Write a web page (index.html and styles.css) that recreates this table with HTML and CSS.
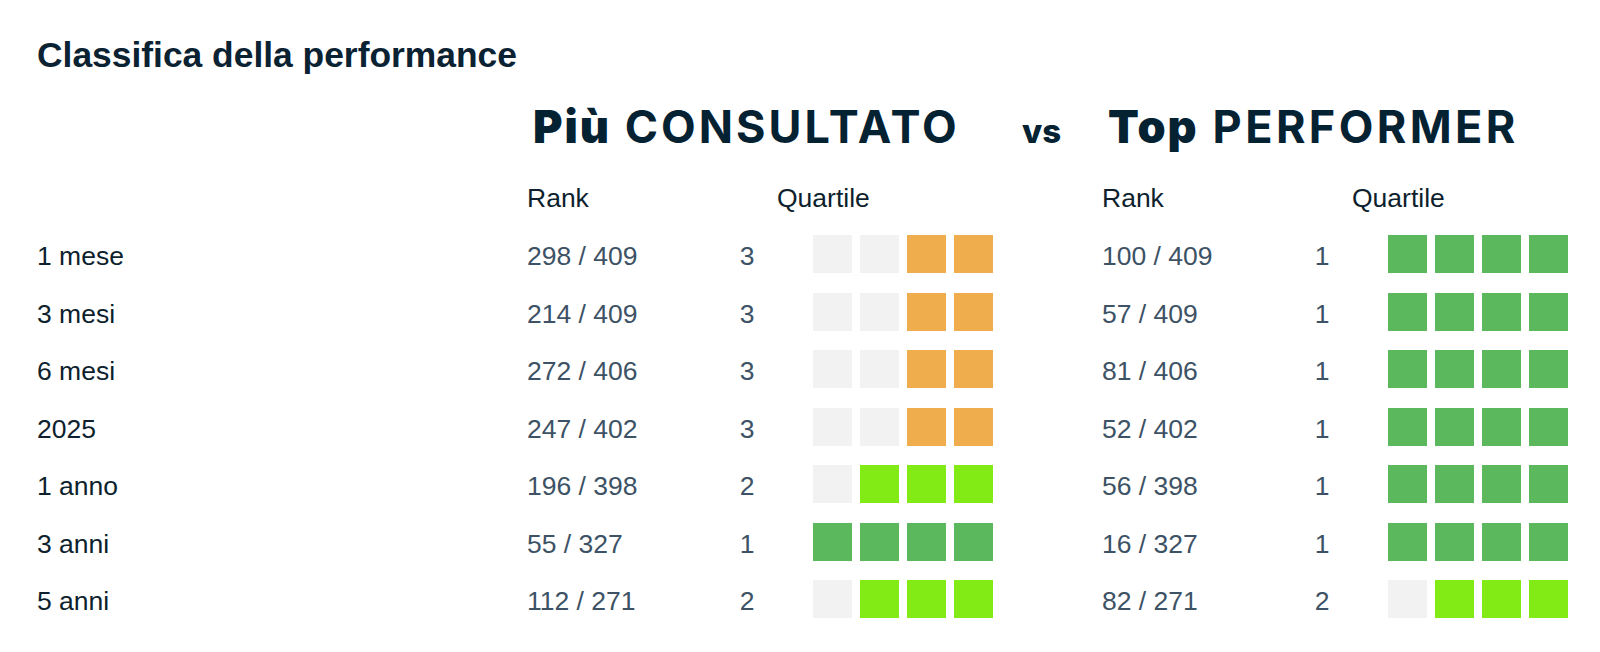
FILE: index.html
```html
<!DOCTYPE html>
<html lang="it">
<head>
<meta charset="utf-8">
<title>Classifica della performance</title>
<link rel="stylesheet" href="styles.css">
</head>
<body>
<div class="page">
  <h2 class="title">Classifica della performance</h2>
  <div class="heads">
    <div class="heads-spacer"></div>
    <div class="head head-left"><span class="strong">Più</span> CONSULTATO</div>
    <div class="vs">vs</div>
    <div class="head head-right"><span class="strong">Top</span> PERFORMER</div>
  </div>

  <div class="row header-row">
    <div class="label"></div>
    <div class="group"><span class="rank">Rank</span><span class="q"></span><span class="qhead">Quartile</span></div>
    <div class="group"><span class="rank">Rank</span><span class="q"></span><span class="qhead">Quartile</span></div>
  </div>

  <div class="row">
    <div class="label">1 mese</div>
    <div class="group"><span class="rank">298 / 409</span><span class="q">3</span><div class="bars"><i class="bar off"></i><i class="bar off"></i><i class="bar q3"></i><i class="bar q3"></i></div></div>
    <div class="group"><span class="rank">100 / 409</span><span class="q">1</span><div class="bars"><i class="bar q1"></i><i class="bar q1"></i><i class="bar q1"></i><i class="bar q1"></i></div></div>
  </div>
  <div class="row">
    <div class="label">3 mesi</div>
    <div class="group"><span class="rank">214 / 409</span><span class="q">3</span><div class="bars"><i class="bar off"></i><i class="bar off"></i><i class="bar q3"></i><i class="bar q3"></i></div></div>
    <div class="group"><span class="rank">57 / 409</span><span class="q">1</span><div class="bars"><i class="bar q1"></i><i class="bar q1"></i><i class="bar q1"></i><i class="bar q1"></i></div></div>
  </div>
  <div class="row">
    <div class="label">6 mesi</div>
    <div class="group"><span class="rank">272 / 406</span><span class="q">3</span><div class="bars"><i class="bar off"></i><i class="bar off"></i><i class="bar q3"></i><i class="bar q3"></i></div></div>
    <div class="group"><span class="rank">81 / 406</span><span class="q">1</span><div class="bars"><i class="bar q1"></i><i class="bar q1"></i><i class="bar q1"></i><i class="bar q1"></i></div></div>
  </div>
  <div class="row">
    <div class="label">2025</div>
    <div class="group"><span class="rank">247 / 402</span><span class="q">3</span><div class="bars"><i class="bar off"></i><i class="bar off"></i><i class="bar q3"></i><i class="bar q3"></i></div></div>
    <div class="group"><span class="rank">52 / 402</span><span class="q">1</span><div class="bars"><i class="bar q1"></i><i class="bar q1"></i><i class="bar q1"></i><i class="bar q1"></i></div></div>
  </div>
  <div class="row">
    <div class="label">1 anno</div>
    <div class="group"><span class="rank">196 / 398</span><span class="q">2</span><div class="bars"><i class="bar off"></i><i class="bar q2"></i><i class="bar q2"></i><i class="bar q2"></i></div></div>
    <div class="group"><span class="rank">56 / 398</span><span class="q">1</span><div class="bars"><i class="bar q1"></i><i class="bar q1"></i><i class="bar q1"></i><i class="bar q1"></i></div></div>
  </div>
  <div class="row">
    <div class="label">3 anni</div>
    <div class="group"><span class="rank">55 / 327</span><span class="q">1</span><div class="bars"><i class="bar q1"></i><i class="bar q1"></i><i class="bar q1"></i><i class="bar q1"></i></div></div>
    <div class="group"><span class="rank">16 / 327</span><span class="q">1</span><div class="bars"><i class="bar q1"></i><i class="bar q1"></i><i class="bar q1"></i><i class="bar q1"></i></div></div>
  </div>
  <div class="row">
    <div class="label">5 anni</div>
    <div class="group"><span class="rank">112 / 271</span><span class="q">2</span><div class="bars"><i class="bar off"></i><i class="bar q2"></i><i class="bar q2"></i><i class="bar q2"></i></div></div>
    <div class="group"><span class="rank">82 / 271</span><span class="q">2</span><div class="bars"><i class="bar off"></i><i class="bar q2"></i><i class="bar q2"></i><i class="bar q2"></i></div></div>
  </div>
</div>
</body>
</html>
```

FILE: styles.css
```css
html, body {
  margin: 0;
  padding: 0;
  background: #ffffff;
}

.page {
  padding-left: 37px;
  font-family: "Liberation Sans", Arial, sans-serif;
  font-size: 26.5px;
  color: #0e1f2d;
}

.title {
  margin: 35px 0 0 0;
  font-size: 35.4px;
  line-height: 40px;
  font-weight: 700;
  color: #0b2232;
}

.heads {
  display: flex;
  align-items: baseline;
  margin-top: 24px;
  height: 56px;
  font-family: Inter, "Noto Sans", sans-serif;
  color: #052233;
}

.heads-spacer {
  width: 496px;
  flex: none;
}

.head {
  font-size: 45px;
  line-height: 56px;
  font-weight: 700;
  letter-spacing: 3px;
  white-space: nowrap;
}

.head-right {
  letter-spacing: 3.4px;
}

.head-left {
  width: 489px;
  flex: none;
}

.strong {
  font-weight: 900;
  letter-spacing: 2px;
}

.vs {
  width: 86px;
  flex: none;
  font-size: 33px;
  line-height: 56px;
  font-weight: 800;
}

.row {
  display: flex;
  align-items: flex-start;
  height: 57.5px;
}

.header-row {
  margin-top: 28px;
  height: 42px;
}

.header-row .rank,
.header-row .qhead {
  padding-top: 0;
  color: #0e1f2d;
}

.label {
  width: 490px;
  flex: none;
  padding-top: 16px;
  line-height: 30px;
}

.header-row .label {
  padding-top: 0;
}

.group {
  display: flex;
  align-items: flex-start;
  width: 575px;
  flex: none;
}

.rank {
  width: 190px;
  flex: none;
  padding-top: 16px;
  line-height: 30px;
  color: #3d5265;
}

.q {
  width: 60px;
  flex: none;
  padding-top: 16px;
  line-height: 30px;
  text-align: center;
  color: #3d5265;
}

.header-row .q {
  padding-top: 0;
}

.qhead {
  line-height: 30px;
}

.bars {
  display: flex;
  gap: 8px;
  margin-left: 36px;
  margin-top: 10px;
}

.bar {
  display: block;
  width: 39px;
  height: 38px;
}

.bar.off { background: #f2f2f2; }
.bar.q3 { background: #f0ad4e; }
.bar.q2 { background: #82ea15; }
.bar.q1 { background: #5cb85c; }
```
